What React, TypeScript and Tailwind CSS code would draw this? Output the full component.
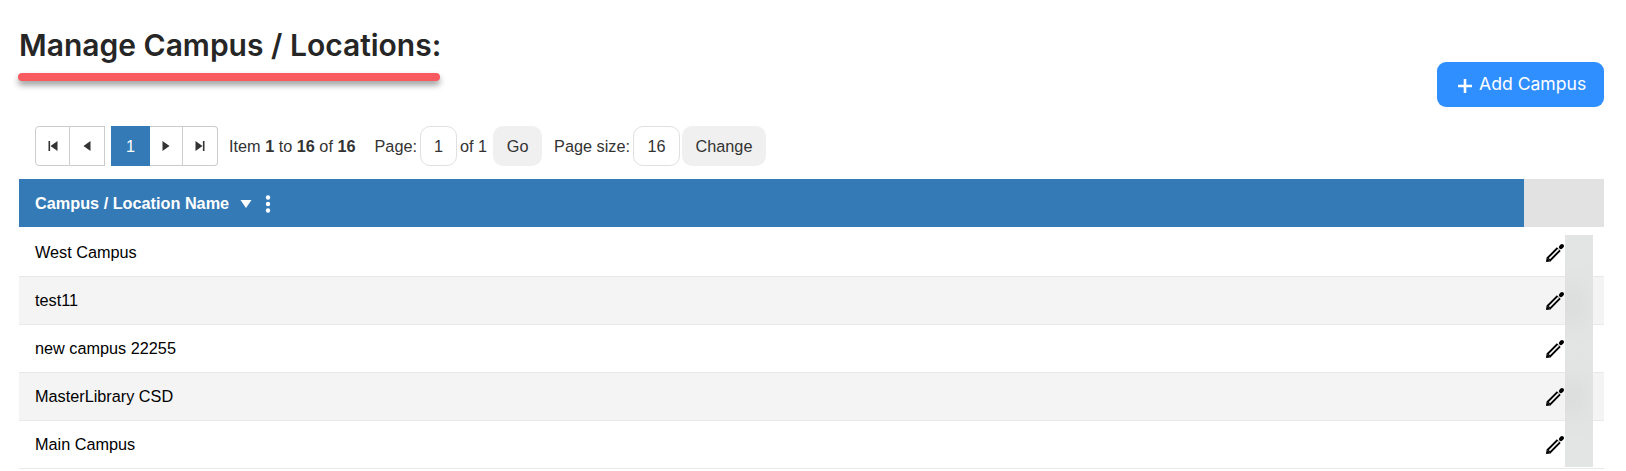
import React from "react";

const campuses = ["West Campus", "test11", "new campus 22255", "MasterLibrary CSD", "Main Campus"];

function PencilIcon() {
  return (
    <svg width="20" height="20" viewBox="0 0 20 20" fill="none">
      <path d="M3.5 16.5 L13.8 6.2" stroke="#000" strokeWidth="5.4" />
      <path d="M4.4 15.6 L13.6 6.4" stroke="#fff" strokeWidth="1.5" />
      <path d="M1 19 L1.6 14.4 L5.6 18.4 Z" fill="#000" />
      <path d="M15.9 4.1 L17 3" stroke="#000" strokeWidth="4" strokeLinecap="round" />
    </svg>
  );
}

function PagerIcon({ d }: { d: string }) {
  return (
    <svg width="12" height="12" viewBox="0 0 12 12" fill="#333">
      <path d={d} />
    </svg>
  );
}

export default function App() {
  return (
    <div className="relative h-[471px] w-[1626px] overflow-hidden bg-white pl-[19px] pr-[22px] font-['Liberation_Sans',Arial,sans-serif]">
      <div className="flex h-[126px] items-start justify-between">
        <div className="-ml-px w-[422px] pt-[27px]">
          <h1 className="whitespace-nowrap pl-px font-['Inter',sans-serif] text-[30px] font-semibold leading-[36px] text-[#262626]">
            Manage Campus / Locations:
          </h1>
          <div className="mt-[10px] h-[8px] rounded-full bg-[#f85a60] shadow-[0_4px_6px_rgba(0,0,0,0.4)]"></div>
        </div>
        <button className="mt-[62px] flex h-[45px] w-[167px] items-center gap-[7px] rounded-[9px] bg-[#308fff] pl-[21px] font-['Inter',sans-serif] text-[17.6px] text-white">
          <svg width="14" height="14" viewBox="0 0 14 14" stroke="#fff" strokeWidth="2.6" className="mt-[3px]">
            <path d="M7 0v14M0 7h14" />
          </svg>
          Add Campus
        </button>
      </div>

      <div className="flex h-[53px] items-start pl-[16px] text-[16.25px] text-[#333]">
        <div className="flex h-[40px]">
          <div className="flex w-[35px] items-center justify-center rounded-l-[4px] border border-[#ccc]">
            <PagerIcon d="M1.5 1h1.6v10H1.5zM10.5 1v10L3.5 6z" />
          </div>
          <div className="flex w-[35px] items-center justify-center border border-l-0 border-[#ccc]">
            <PagerIcon d="M9.5 1v10L2.5 6z" />
          </div>
          <div className="ml-[6px] flex w-[39px] items-center justify-center bg-[#337ab7] text-white">1</div>
          <div className="flex w-[33px] items-center justify-center border-y border-r border-[#ccc]">
            <PagerIcon d="M2.5 1v10L9.5 6z" />
          </div>
          <div className="flex w-[35px] items-center justify-center rounded-r-[4px] border-y border-r border-[#ccc]">
            <PagerIcon d="M1.5 1v10L8.5 6zM8.9 1h1.6v10H8.9z" />
          </div>
        </div>
        <div className="ml-[11px] flex h-[40px] items-center">
          <span>
            Item <b>1</b> to <b>16</b> of <b>16</b>
          </span>
          <span className="ml-[19px]">Page:</span>
          <div className="ml-[3px] flex h-[40px] w-[37px] items-center justify-center rounded-[10px] border border-[#e0e0e0]">1</div>
          <span className="ml-[3px]">of 1</span>
          <div className="ml-[6px] flex h-[40px] w-[49px] items-center justify-center rounded-[10px] bg-[#f0f0f0]">Go</div>
          <span className="ml-[12px]">Page size:</span>
          <div className="ml-[3px] flex h-[40px] w-[47px] items-center justify-center rounded-[10px] border border-[#e0e0e0]">16</div>
          <div className="ml-[2px] flex h-[40px] w-[84px] items-center justify-center rounded-[10px] bg-[#f0f0f0]">Change</div>
        </div>
      </div>

      <div className="flex h-[48px]">
        <div className="flex flex-1 items-center bg-[#337ab7] pl-[16px] pt-px text-[16.25px] font-bold text-white">
          Campus / Location Name
          <svg width="12" height="10" viewBox="0 0 12 10" fill="#fff" className="ml-[11px]">
            <path d="M0.5 1h11L6 9z" />
          </svg>
          <svg width="6" height="18" viewBox="0 0 6 18" fill="#fff" className="ml-[13px]">
            <circle cx="3" cy="2.5" r="2.2" />
            <circle cx="3" cy="9" r="2.2" />
            <circle cx="3" cy="15.5" r="2.2" />
          </svg>
        </div>
        <div className="w-[80px] bg-[#e2e2e2]"></div>
      </div>

      <div className="pt-[2px]">
        {campuses.map((name, i) => (
          <div
            key={name}
            className={`flex h-[48px] items-center justify-between border-b border-[#e9e9e9] pl-[16px] pr-[39px] text-[16.25px] text-black ${
              i % 2 === 1 ? "bg-[#f4f4f4]" : "bg-white"
            }`}
          >
            {name}
            <PencilIcon />
          </div>
        ))}
      </div>

      <div className="absolute left-[1565px] top-[235px] h-[232px] w-[28px] overflow-hidden bg-[#e3e4e4]">
        <div className="absolute -left-[6px] top-[52px] h-[36px] w-[24px] rounded-full bg-[#d8d8d8] blur-md"></div>
        <div className="absolute -left-[6px] top-[144px] h-[36px] w-[24px] rounded-full bg-[#d8d8d8] blur-md"></div>
      </div>
    </div>
  );
}
